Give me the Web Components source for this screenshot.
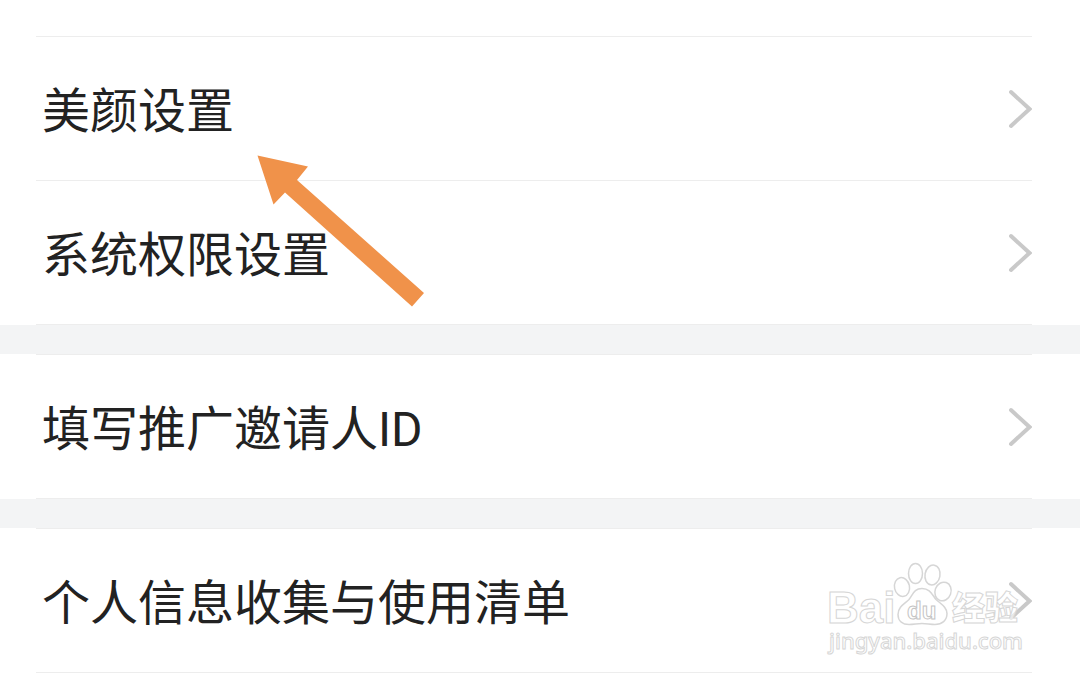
<!DOCTYPE html>
<html lang="zh-CN">
<head>
<meta charset="utf-8">
<meta name="viewport" content="width=device-width, initial-scale=1">
<title>设置</title>
<style>
  body { margin: 0; background: #fff; color: #222; font-family: Roboto, "Noto Sans CJK SC", sans-serif; }
</style>
</head>
<body>
<settings-page>
  <settings-group>
    <settings-row href="#beauty">美颜设置<pointer-arrow slot="overlay"></pointer-arrow></settings-row>
    <settings-row href="#permissions">系统权限设置</settings-row>
  </settings-group>
  <settings-group>
    <settings-row href="#inviter">填写推广邀请人ID</settings-row>
  </settings-group>
  <settings-group>
    <settings-row href="#privacy">个人信息收集与使用清单<site-watermark slot="overlay"></site-watermark></settings-row>
  </settings-group>
</settings-page>

<script>
const define = (name, html) => {
  const template = document.createElement('template');
  template.innerHTML = html;
  customElements.define(name, class extends HTMLElement {
    constructor() {
      super();
      this.attachShadow({ mode: 'open' }).append(template.content.cloneNode(true));
    }
    connectedCallback() {
      const link = this.shadowRoot.querySelector('a');
      if (link) link.setAttribute('href', this.getAttribute('href') || '#');
      // The arrow and the watermark lie over the row, outside its link.
    }
  });
};

define('settings-page', `
  <style>
    :host { display: block; }
    main { display: flex; flex-direction: column; gap: 29px; padding-top: 36px;
      background: linear-gradient(#fff, #fff) top / 100% 36px no-repeat, #f3f4f5; }
  </style>
  <main><slot></slot></main>`);

define('settings-group', `
  <style>
    :host { display: block; background: #fff; }
    section { display: flex; flex-direction: column; }
    section::after { content: ""; height: 1px; margin: 0 48px 0 36px; background: #ededed; }
  </style>
  <section><slot></slot></section>`);

define('settings-row', `
  <style>
    :host { display: block; position: relative; margin: 0 48px 0 36px; }
    a { display: flex; align-items: center; justify-content: space-between; box-sizing: border-box;
      min-height: 144px; padding-left: 6px; border-top: 1px solid #ededed;
      color: inherit; text-decoration: none; font-size: 48px; line-height: 72px; }
    span { padding-top: 6px; }
    svg { flex: none; width: 24px; height: 40px; }
  </style>
  <a><span><slot></slot></span>
    <svg viewBox="0 0 24 40" fill="none" stroke="#c9c9c9" stroke-width="4" stroke-linecap="round" aria-hidden="true"><path d="M3 3 21.500 20 3 37"/></svg>
  </a>
  <slot name="overlay"></slot>`);

define('pointer-arrow', `
  <style>
    :host { display: block; position: absolute; z-index: 1; left: 220px; top: 118px; pointer-events: none; }
    svg { display: block; width: 170px; height: 154px; }
  </style>
  <svg viewBox="256 154 170 154" aria-hidden="true"><path fill="#f0924a" d="M257.500 155.500 308 166.500 297 180 424 293 412 306.500 285 192.500 273.500 204.500Z"/></svg>`);

define('site-watermark', `
  <style>
    :host { display: block; position: absolute; z-index: 1; right: 8px; bottom: 10px; pointer-events: none; }
    svg { display: block; width: 200px; height: 104px; }
    text { fill: #fff; fill-opacity: .6; stroke: #d6d6d6; stroke-width: 1; }
    .latin { font: bold 44px "Liberation Sans", sans-serif; }
    .du { font: bold 24px "Liberation Sans", sans-serif; stroke: #c4c4c4; }
    .cjk { font: 900 33px "Noto Sans CJK SC", sans-serif; }
    .site { font: 500 22px "Noto Sans", sans-serif; }
  </style>
  <svg viewBox="824 558 200 104">
    <text class="latin" x="827" y="623">Bai</text>
    <g fill="#fff" fill-opacity=".6" stroke="#d6d6d6" stroke-width="1.500">
      <ellipse cx="902" cy="587" rx="7.500" ry="9.500" transform="rotate(-12 902 587)"/>
      <ellipse cx="915.500" cy="573.500" rx="7" ry="10"/>
      <ellipse cx="932.500" cy="575" rx="7.500" ry="10" transform="rotate(10 932.500 575)"/>
      <ellipse cx="943" cy="591.500" rx="8" ry="9.500" transform="rotate(20 943 591.500)"/>
      <path d="M922 588.500c-8 0-9 6-13 11-4 4-11 7-11 15 0 7 5 10 11 10 5 0 8-1 13-1s8 1 13 1c7 0 12-4 12-11s-7-10-11-14c-4-5-6-11-14-11Z"/>
    </g>
    <text class="du" x="907" y="619">du</text>
    <text class="cjk" x="952" y="620">经验</text>
    <text class="site" x="829" y="649">jingyan.baidu.com</text>
  </svg>`);
</script>
</body>
</html>
